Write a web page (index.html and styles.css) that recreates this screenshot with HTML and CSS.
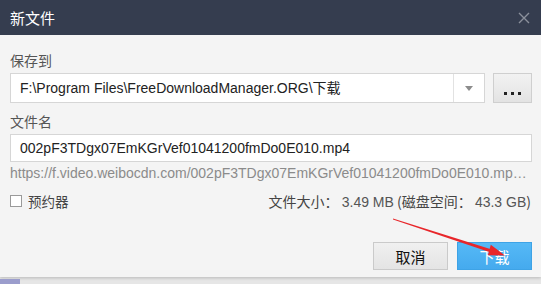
FILE: index.html
```html
<!DOCTYPE html>
<html lang="zh-CN">
<head>
  <meta charset="UTF-8">
  <title>新文件</title>
  <link rel="stylesheet" href="styles.css">
</head>
<body>
  <div class="dialog">
    <div class="titlebar">
      <span class="title">新文件</span>
      <svg class="close" width="12" height="12" viewBox="0 0 12 12">
        <path d="M1 1 L11 11 M11 1 L1 11" stroke="#8b909b" stroke-width="1.4" fill="none"/>
      </svg>
    </div>

    <div class="content">
      <div class="label">保存到</div>
      <div class="path-row">
        <div class="combo">
          <span class="combo-text">F:\Program Files\FreeDownloadManager.ORG\下载</span>
          <span class="combo-arrow"><i></i></span>
        </div>
        <button class="browse"><span></span><span></span><span></span></button>
      </div>

      <div class="label label-name">文件名</div>
      <div class="field">002pF3TDgx07EmKGrVef01041200fmDo0E010.mp4</div>
      <div class="url">https://f.video.weibocdn.com/002pF3TDgx07EmKGrVef01041200fmDo0E010.mp…</div>

      <div class="info-row">
        <label class="check"><span class="box"></span>预约器</label>
        <div class="size">文件大小： <span class="num">3.49 MB</span> (磁盘空间： <span class="num">43.3 GB</span>)</div>
      </div>

      <div class="actions">
        <button class="btn">取消</button>
        <button class="btn btn-primary">下载</button>
      </div>
    </div>

    <!-- red annotation arrow -->
    <svg class="arrow" width="541" height="284" viewBox="0 0 541 284">
      <polygon points="393,218.6 491,249.2 490,252.2 393,219.6" fill="#e8262a"/>
      <polygon points="505,255.5 490.8,244.8 487.9,255.2" fill="#e8262a"/>
    </svg>
  </div>
  <div class="under">
    <span class="under-mark"></span>
  </div>
</body>
</html>
```

FILE: styles.css
```css
body {
  margin: 0;
  background: #e6e6e6;
  font-family: "Liberation Sans", "Noto Sans CJK SC", Arial, sans-serif;
  color: #333;
  width: 541px;
  height: 284px;
  overflow: hidden;
}

.dialog {
  position: relative;
  height: 277px;
  background: #f4f4f4;
  box-shadow: 0 1px 3px rgba(0, 0, 0, 0.2);
}

.titlebar {
  height: 35px;
  background: #353d4f;
  display: flex;
  align-items: center;
  justify-content: space-between;
  padding: 0 11px 0 10px;
}

.title {
  color: #fff;
  font-family: "Noto Sans CJK SC", sans-serif;
  font-size: 15px;
}

.content {
  padding: 15px 9px 0 10px;
}

.label {
  font-family: "Noto Sans CJK SC", sans-serif;
  font-size: 14px;
  line-height: 20px;
  color: #555;
  margin-bottom: 3px;
}

.label-name {
  margin-top: 8px;
}

.path-row {
  display: flex;
  gap: 8px;
  height: 30px;
}

.combo {
  flex: 1;
  display: flex;
  background: #fff;
  border: 1px solid #d6d6d6;
  box-sizing: border-box;
}

.combo-text {
  flex: 1;
  padding-left: 9px;
  font-size: 14px;
  line-height: 28px;
  color: #222;
}

.combo-arrow {
  width: 30px;
  border-left: 1px solid #e2e2e2;
  display: flex;
  align-items: center;
  justify-content: center;
}

.combo-arrow i {
  width: 0;
  height: 0;
  border-left: 4px solid transparent;
  border-right: 4px solid transparent;
  border-top: 5px solid #8c8c8c;
}

.browse {
  width: 39px;
  border: 1px solid #cfcfcf;
  background: linear-gradient(#f2f2f2, #e3e3e3);
  display: flex;
  align-items: flex-end;
  justify-content: center;
  gap: 4px;
  padding: 0 0 7px;
}

.browse span {
  width: 3px;
  height: 3px;
  background: #222;
}

.field {
  height: 28px;
  background: #fff;
  border: 1px solid #d6d6d6;
  box-sizing: border-box;
  padding-left: 9px;
  font-size: 14px;
  line-height: 26px;
  color: #222;
}

.url {
  margin-top: 3px;
  font-size: 14px;
  line-height: 16px;
  color: #8b8b8b;
  white-space: nowrap;
}

.info-row {
  margin-top: 10px;
  display: flex;
  justify-content: space-between;
  align-items: center;
  height: 20px;
}

.check {
  display: flex;
  align-items: center;
  gap: 6px;
  font-family: "Noto Sans CJK SC", sans-serif;
  font-size: 13.5px;
  color: #444;
}

.box {
  width: 10px;
  height: 10px;
  border: 1px solid #9a9a9a;
  background: #fff;
}

.size {
  font-family: "Noto Sans CJK SC", sans-serif;
  font-size: 14px;
  color: #444;
  padding-right: 1px;
}

.size .num {
  font-family: "Liberation Sans", sans-serif;
  font-size: 14px;
  color: #555;
}

.actions {
  margin-top: 31px;
  display: flex;
  justify-content: flex-end;
  gap: 9px;
}

.btn {
  width: 75px;
  height: 28px;
  border: 1px solid #cacaca;
  background: linear-gradient(#f0f0f0, #e4e4e4);
  font-family: "Noto Sans CJK SC", sans-serif;
  font-size: 15px;
  color: #111;
  padding: 0;
}

.btn-primary {
  border-color: #3ea3e6;
  background: linear-gradient(#55b9f6, #45aaee);
  color: #fff;
}

.arrow {
  position: absolute;
  left: 0;
  top: 0;
  pointer-events: none;
}

.under {
  height: 7px;
  position: relative;
}

.under-mark {
  display: block;
  width: 20px;
  height: 5px;
  margin-top: 2px;
  background: #9b9dcc;
}
```
